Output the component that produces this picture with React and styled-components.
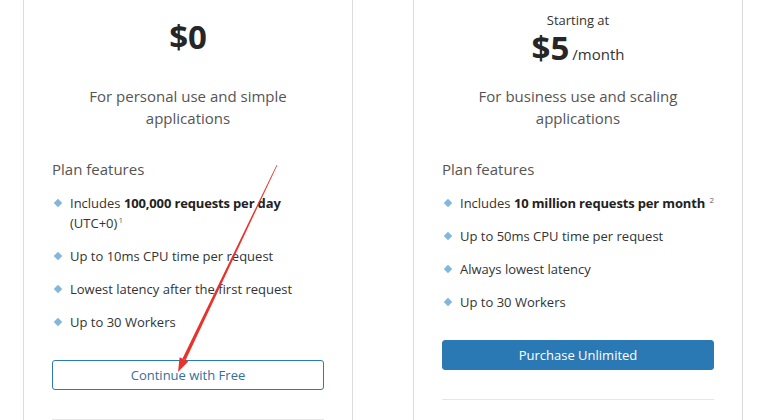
import React from "react";
import styled, { createGlobalStyle } from "styled-components";

const GlobalStyle = createGlobalStyle`
  html, body {
    margin: 0;
    padding: 0;
    background: #ffffff;
    overflow: hidden;
  }
  body {
    font-family: "Open Sans", "Noto Sans", sans-serif;
    color: #333;
  }
`;

const Page = styled.div`
  position: relative;
  width: 768px;
  height: 420px;
  overflow: hidden;
`;

const Cards = styled.div`
  display: flex;
  gap: 60px;
  padding-left: 23px;
`;

const Card = styled.div`
  box-sizing: border-box;
  width: 330px;
  height: 480px;
  padding: 0 28px;
  border: 1px solid #dcdcdc;
  border-top: none;
  display: flex;
  flex-direction: column;
`;

const Header = styled.div`
  height: 74px;
  display: flex;
  flex-direction: column;
  align-items: center;
  justify-content: center;
`;

const Starting = styled.div`
  font-size: 13px;
  line-height: 16px;
  color: #333;
  margin: 2px 0 3px;
`;

const PriceRow = styled.div`
  display: flex;
  align-items: baseline;
  gap: 3px;
`;

const Price = styled.span`
  font-size: 33px;
  font-weight: 700;
  line-height: 34px;
  color: #262626;
`;

const Per = styled.span`
  font-size: 15px;
  color: #333;
`;

const Description = styled.p`
  margin: 11px 0 0;
  text-align: center;
  font-size: 15px;
  line-height: 22px;
  color: #555;
  padding: 0 30px;
`;

const FeaturesTitle = styled.h4`
  margin: 29px 0 13px;
  font-size: 15px;
  line-height: 22px;
  font-weight: 400;
  color: #555;
`;

const FeatureList = styled.ul`
  list-style: none;
  margin: 0;
  padding: 0;
`;

const Feature = styled.li`
  position: relative;
  padding-left: 18px;
  margin-bottom: 13px;
  font-size: 13px;
  line-height: 20px;
  color: #333;
  white-space: ${(p) => (p.$nowrap ? "nowrap" : "normal")};

  &::before {
    content: "";
    position: absolute;
    left: 3px;
    top: 7px;
    width: 6px;
    height: 6px;
    background: #82b6dc;
    transform: rotate(45deg);
  }

  b {
    font-weight: 700;
    color: #222;
    letter-spacing: -0.15px;
  }

  sup {
    font-size: 8px;
    line-height: 0;
    vertical-align: 5px;
    color: #666;
    margin-left: 1px;
  }
`;

const Button = styled.button`
  box-sizing: border-box;
  margin-top: 15px;
  width: 100%;
  height: 30px;
  border-radius: 3px;
  font-family: inherit;
  font-size: 13px;
  cursor: pointer;
  border: 1px solid #2d7ab0;
  background: ${(p) => (p.$primary ? "#2b79b4" : "#ffffff")};
  color: ${(p) => (p.$primary ? "#ffffff" : "#33709c")};
`;

const Divider = styled.hr`
  margin: 29px 0 0;
  border: none;
  border-top: 1px solid #e6e6e6;
`;

const Arrow = styled.svg`
  position: absolute;
  left: 0;
  top: 0;
  pointer-events: none;
`;

export default function App() {
  return (
    <Page>
      <GlobalStyle />
      <Cards>
        <Card>
          <Header>
            <PriceRow>
              <Price>$0</Price>
            </PriceRow>
          </Header>
          <Description>For personal use and simple applications</Description>
          <FeaturesTitle>Plan features</FeaturesTitle>
          <FeatureList>
            <Feature>
              Includes <b>100,000 requests per day</b> (UTC+0)<sup>1</sup>
            </Feature>
            <Feature>Up to 10ms CPU time per request</Feature>
            <Feature>Lowest latency after the first request</Feature>
            <Feature>Up to 30 Workers</Feature>
          </FeatureList>
          <Button>Continue with Free</Button>
          <Divider />
        </Card>
        <Card>
          <Header>
            <Starting>Starting at</Starting>
            <PriceRow>
              <Price>$5</Price>
              <Per>/month</Per>
            </PriceRow>
          </Header>
          <Description>For business use and scaling applications</Description>
          <FeaturesTitle>Plan features</FeaturesTitle>
          <FeatureList>
            <Feature $nowrap>
              Includes <b>10 million requests per month</b> <sup>2</sup>
            </Feature>
            <Feature>Up to 50ms CPU time per request</Feature>
            <Feature>Always lowest latency</Feature>
            <Feature>Up to 30 Workers</Feature>
          </FeatureList>
          <Button $primary>Purchase Unlimited</Button>
          <Divider />
        </Card>
      </Cards>
      <Arrow width="768" height="420" viewBox="0 0 768 420">
        <polygon
          points="277.4,165 276.6,165 182.4,358.7 185.6,360.2"
          fill="#e8322c"
        />
        <polygon points="178,372 188.3,361.5 179.6,357.3" fill="#e8322c" />
      </Arrow>
    </Page>
  );
}
